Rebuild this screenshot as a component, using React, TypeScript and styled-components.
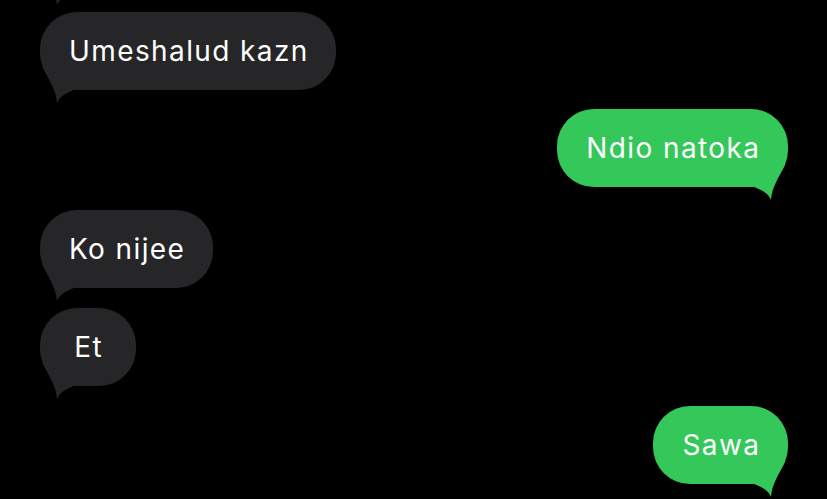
import React from "react";
import styled, { createGlobalStyle } from "styled-components";

const Global = createGlobalStyle`
  html, body {
    margin: 0;
    padding: 0;
    background: #000;
    overflow: hidden;
  }
  body {
    width: 827px;
    height: 499px;
    font-family: Inter, "Liberation Sans", Arial, sans-serif;
  }
`;

const Screen = styled.div`
  width: 827px;
  height: 499px;
  background: #000;
  overflow: hidden;
`;

const Thread = styled.div`
  display: flex;
  flex-direction: column;
  padding: 0 39px 0 40px;
  margin-top: -86px;
`;

const Row = styled.div<{ $mine?: boolean; $mt: number }>`
  display: flex;
  justify-content: ${(p) => (p.$mine ? "flex-end" : "flex-start")};
  margin-top: ${(p) => p.$mt}px;
`;

const Bubble = styled.div<{ $mine?: boolean }>`
  position: relative;
  box-sizing: border-box;
  height: 78px;
  min-width: 96px;
  padding: 0 27.6px 0 29px;
  border-radius: 37px;
  display: flex;
  align-items: center;
  justify-content: center;
  background: ${(p) => (p.$mine ? "#34c759" : "#262628")};
  color: #fff;
  font-size: 28px;
  line-height: 34px;
  letter-spacing: 1.4px;
  white-space: nowrap;
`;

const Label = styled.span`
  position: relative;
  z-index: 1;
`;

const TailSvg = styled.svg<{ $mine?: boolean }>`
  position: absolute;
  bottom: -14px;
  width: 44px;
  height: 40px;
  ${(p) => (p.$mine ? "right: 0; transform: scaleX(-1);" : "left: 0;")}
`;

const Tail: React.FC<{ mine?: boolean; color: string }> = ({ mine, color }) => (
  <TailSvg $mine={mine} viewBox="0 0 44 40" aria-hidden>
    <path
      d="M3,4 C10,18 16,26 17,39 C19,33 26,28 40,24 L44,24 L44,0 L3,0 Z"
      fill={color}
    />
  </TailSvg>
);

type Msg = { text: string; mine?: boolean; mt: number };

const messages: Msg[] = [
  { text: "", mt: 0 },
  { text: "Umeshalud kazn", mt: 20 },
  { text: "Ndio natoka", mine: true, mt: 19 },
  { text: "Ko nijee", mt: 23 },
  { text: "Et", mt: 20 },
  { text: "Sawa", mine: true, mt: 20 },
];

export default function App() {
  return (
    <Screen>
      <Global />
      <Thread>
        {messages.map((m, i) => (
          <Row key={i} $mine={m.mine} $mt={m.mt}>
            <Bubble $mine={m.mine} style={m.text ? undefined : { width: 200 }}>
              <Tail mine={m.mine} color={m.mine ? "#34c759" : "#262628"} />
              {m.text && <Label>{m.text}</Label>}
            </Bubble>
          </Row>
        ))}
      </Thread>
    </Screen>
  );
}
